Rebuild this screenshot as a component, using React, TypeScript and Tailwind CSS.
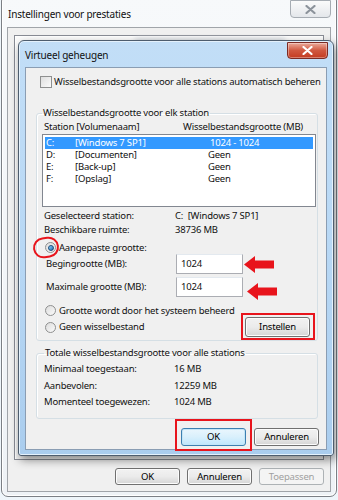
import React from "react";

const font = "font-['Noto_Sans','Liberation_Sans',sans-serif]";

const WinButton = ({ label, w, h, def, disabled }: { label: string; w: string; h: string; def?: boolean; disabled?: boolean }) => (
  <div
    className={`${w} ${h} flex items-center justify-center rounded-[3px] border leading-none ${
      disabled
        ? "border-[#adb2b5] bg-[#f4f4f4] text-[#a0a0a0]"
        : def
        ? "border-[#3c7fb1] bg-gradient-to-b from-[#eaf6fd] via-[#d9f0fc] to-[#bee6fd] text-black shadow-[inset_0_0_0_1px_#c4e5f6]"
        : "border-[#707070] bg-gradient-to-b from-[#f2f2f2] via-[#ebebeb] to-[#d5d5d5] text-black shadow-[inset_0_0_0_1px_#fcfcfc]"
    }`}
  >
    {label}
  </div>
);

const Radio = ({ checked }: { checked?: boolean }) => (
  <div className="w-[11px] h-[11px] rounded-full border border-[#8e8f8f] bg-gradient-to-br from-[#dcdcdc] to-[#fbfbfb] flex items-center justify-center shrink-0">
    {checked && <div className="w-[6px] h-[6px] rounded-full bg-gradient-to-br from-[#8ed8ff] to-[#1869b1] border border-[#1a4c7c]" />}
  </div>
);

const CloseX = ({ color }: { color: string }) => (
  <svg width="11" height="9" viewBox="0 0 11 9">
    <path d="M1.5 1 L9.5 8 M9.5 1 L1.5 8" stroke={color} strokeWidth="2.2" strokeLinecap="round" />
  </svg>
);

const Arrow = () => (
  <svg width="30" height="17" viewBox="0 0 30 17">
    <path d="M0 8.5 L11 0 L11 4.5 L30 4.5 L30 12.5 L11 12.5 L11 17 Z" fill="#e8141c" />
  </svg>
);

const drives = [
  { l: "C:", n: "[Windows 7 SP1]", s: "1024 - 1024", sel: true },
  { l: "D:", n: "[Documenten]", s: "Geen" },
  { l: "E:", n: "[Back-up]", s: "Geen" },
  { l: "F:", n: "[Opslag]", s: "Geen" },
];

export default function App() {
  return (
    <div className={`relative w-[338px] h-[500px] overflow-hidden bg-[#eef5fa] text-[9.5px] tracking-[-0.2px] text-[#111] ${font}`}>
      {/* outer window */}
      <div className="absolute left-[1px] top-[-6px] w-[336px] h-[503px] rounded-[7px] border border-[#7b7f85] bg-gradient-to-b from-[#f7f9fb] to-[#eef2f6] shadow-[0_0_0_1px_#ffffff_inset] flex flex-col">
        <div className="h-[32px] pt-[13px] pl-[6px] relative">
          <span className="text-[10px] leading-[12px] block">Instellingen voor prestaties</span>
          <div className="absolute right-[5px] top-[5px] w-[41px] h-[18px] rounded-b-[4px] border border-[#a6acb3] bg-gradient-to-b from-[#fbfbfb] to-[#e4e7eb] flex items-center justify-center">
            <CloseX color="#8c939b" />
          </div>
        </div>
        <div className="mx-[5px] flex-1 border border-[#a0a4a9] bg-[#f0f0f0] flex flex-col mb-[4px]">
          <div className="mt-[7px] ml-[6px] mr-[6px] h-[425px] border border-[#898c95] bg-gradient-to-b from-[#fcfcfc] to-[#f2f2f2] shadow-[inset_1px_1px_0_#ffffff]">
            <div className="ml-[120px] mt-[2px] h-[6px] w-[150px] bg-[#d9dde2] blur-[2px]" />
          </div>
          <div className="flex justify-end gap-[7px] pr-[6px] mt-[8px]">
            <WinButton label="OK" w="w-[65px]" h="h-[17px]" />
            <WinButton label="Annuleren" w="w-[65px]" h="h-[17px]" />
            <WinButton label="Toepassen" w="w-[65px]" h="h-[17px]" disabled />
          </div>
        </div>
      </div>

      {/* inner dialog */}
      <div className="absolute left-[18px] top-[40px] w-[316px] h-[416px] rounded-t-[6px] rounded-b-[3px] border border-[#4e5d6e] bg-gradient-to-b from-[#c2def7] via-[#b8d8f5] to-[#aacdee] shadow-[2px_4px_10px_rgba(0,0,0,0.45),inset_0_0_0_1px_#e4f1fc] flex flex-col">
        <div className="h-[26px] relative flex items-center pl-[6px] pt-[1px]">
          <span className="text-[10px] leading-none">Virtueel geheugen</span>
          <div className="absolute right-[5px] top-[1px] w-[41px] h-[17px] rounded-b-[4px] border border-[#7c2b24] bg-gradient-to-b from-[#e9a99a] via-[#d0573f] to-[#c43a1f] flex items-center justify-center shadow-[inset_0_0_0_1px_rgba(255,255,255,0.35)]">
            <CloseX color="#ffffff" />
          </div>
        </div>
        <div className="mx-[6px] mb-[5px] flex-1 border border-[#8a9db3] bg-[#f0f0f0] flex flex-col pl-[10px] pr-[8px]">
          {/* checkbox */}
          <div className="flex items-center gap-[2px] mt-[8px] ml-[4px] h-[12px]">
            <div className="w-[12px] h-[12px] border border-[#8e8f8f] bg-gradient-to-br from-[#dedede] to-[#fbfbfb] shrink-0" />
            <span className="leading-none whitespace-nowrap">Wisselbestandsgrootte voor alle stations automatisch beheren</span>
          </div>

          {/* group 1 */}
          <fieldset className="mt-[19px] border border-[#d5dfe5] rounded-[3px] pl-[5px] pr-[1px] pb-[3px] shadow-[inset_1px_1px_0_#ffffff]">
            <legend className="px-[1px] leading-[12px]">Wisselbestandsgrootte voor elk station</legend>
            <div className="flex leading-[11px] mt-[2px] ml-[2px]">
              <span className="w-[139px]">Station [Volumenaam]</span>
              <span>Wisselbestandsgrootte (MB)</span>
            </div>
            <div className="mt-[2px] h-[73px] border border-[#828790] bg-white p-[2px]">
              {drives.map((d) => (
                <div key={d.l} className={`h-[12px] flex items-center leading-none pl-[1px] ${d.sel ? "bg-[#3399ff] text-white" : ""}`}>
                  <span className="w-[29px]">{d.l}</span>
                  <span className={d.sel ? "w-[135px]" : "w-[133px]"}>{d.n}</span>
                  <span>{d.s}</span>
                </div>
              ))}
            </div>
            <div className="mt-[2px] ml-[2px] leading-[14px]">
              <div className="flex">
                <span className="w-[131px]">Geselecteerd station:</span>
                <span>C:&nbsp;&nbsp;[Windows 7 SP1]</span>
              </div>
              <div className="flex">
                <span className="w-[131px]">Beschikbare ruimte:</span>
                <span>38736 MB</span>
              </div>
            </div>
            <div className="flex items-center gap-[3px] mt-[4px] ml-[3px] h-[13px] leading-none">
              <Radio checked />
              <span>Aangepaste grootte:</span>
            </div>
            <div className="flex items-center ml-[4px] leading-none">
              <span className="w-[130px]">Begingrootte (MB):</span>
              <div className="w-[67px] h-[20px] border border-[#abadb3] border-t-[#e3e9ef] bg-white flex items-center pl-[4px]">1024</div>
            </div>
            <div className="flex items-center mt-[3px] ml-[4px] leading-none">
              <span className="w-[130px]">Maximale grootte (MB):</span>
              <div className="w-[67px] h-[20px] border border-[#abadb3] border-t-[#e3e9ef] bg-white flex items-center pl-[4px]">1024</div>
            </div>
            <div className="flex items-center gap-[3px] mt-[7px] ml-[3px] h-[13px] leading-none">
              <Radio />
              <span>Grootte wordt door het systeem beheerd</span>
            </div>
            <div className="flex items-center ml-[3px] h-[20px] leading-none">
              <div className="flex items-center gap-[3px] flex-1">
                <Radio />
                <span>Geen wisselbestand</span>
              </div>
              <div className="mr-[6px]">
                <WinButton label="Instellen" w="w-[65px]" h="h-[20px]" />
              </div>
            </div>
          </fieldset>

          {/* group 2 */}
          <fieldset className="mt-[6px] border border-[#d5dfe5] rounded-[3px] pl-[7px] pb-[7px] shadow-[inset_1px_1px_0_#ffffff]">
            <legend className="px-[1px] leading-[12px]">Totale wisselbestandsgrootte voor alle stations</legend>
            <div className="leading-[16.5px] mt-[2px]">
              <div className="flex">
                <span className="w-[130px]">Minimaal toegestaan:</span>
                <span>16 MB</span>
              </div>
              <div className="flex">
                <span className="w-[130px]">Aanbevolen:</span>
                <span>12259 MB</span>
              </div>
              <div className="flex">
                <span className="w-[130px]">Momenteel toegewezen:</span>
                <span>1024 MB</span>
              </div>
            </div>
          </fieldset>

          <div className="flex justify-end gap-[8px] mt-[9px] mr-[-1px]">
            <WinButton label="OK" w="w-[65px]" h="h-[18px]" def />
            <WinButton label="Annuleren" w="w-[65px]" h="h-[18px]" />
          </div>
        </div>
      </div>

      {/* red annotations */}
      <div className="absolute left-[33px] top-[237px] w-[26px] h-[21px] rounded-full border-2 border-[#e8141c] rotate-[-8deg]" />
      <div className="absolute left-[244px] top-[256px]"><Arrow /></div>
      <div className="absolute left-[247px] top-[283px]"><Arrow /></div>
      <div className="absolute left-[241px] top-[313px] w-[74px] h-[27px] border-2 border-[#e8141c]" />
      <div className="absolute left-[175px] top-[419px] w-[77px] h-[32px] border-2 border-[#e8141c]" />
    </div>
  );
}
